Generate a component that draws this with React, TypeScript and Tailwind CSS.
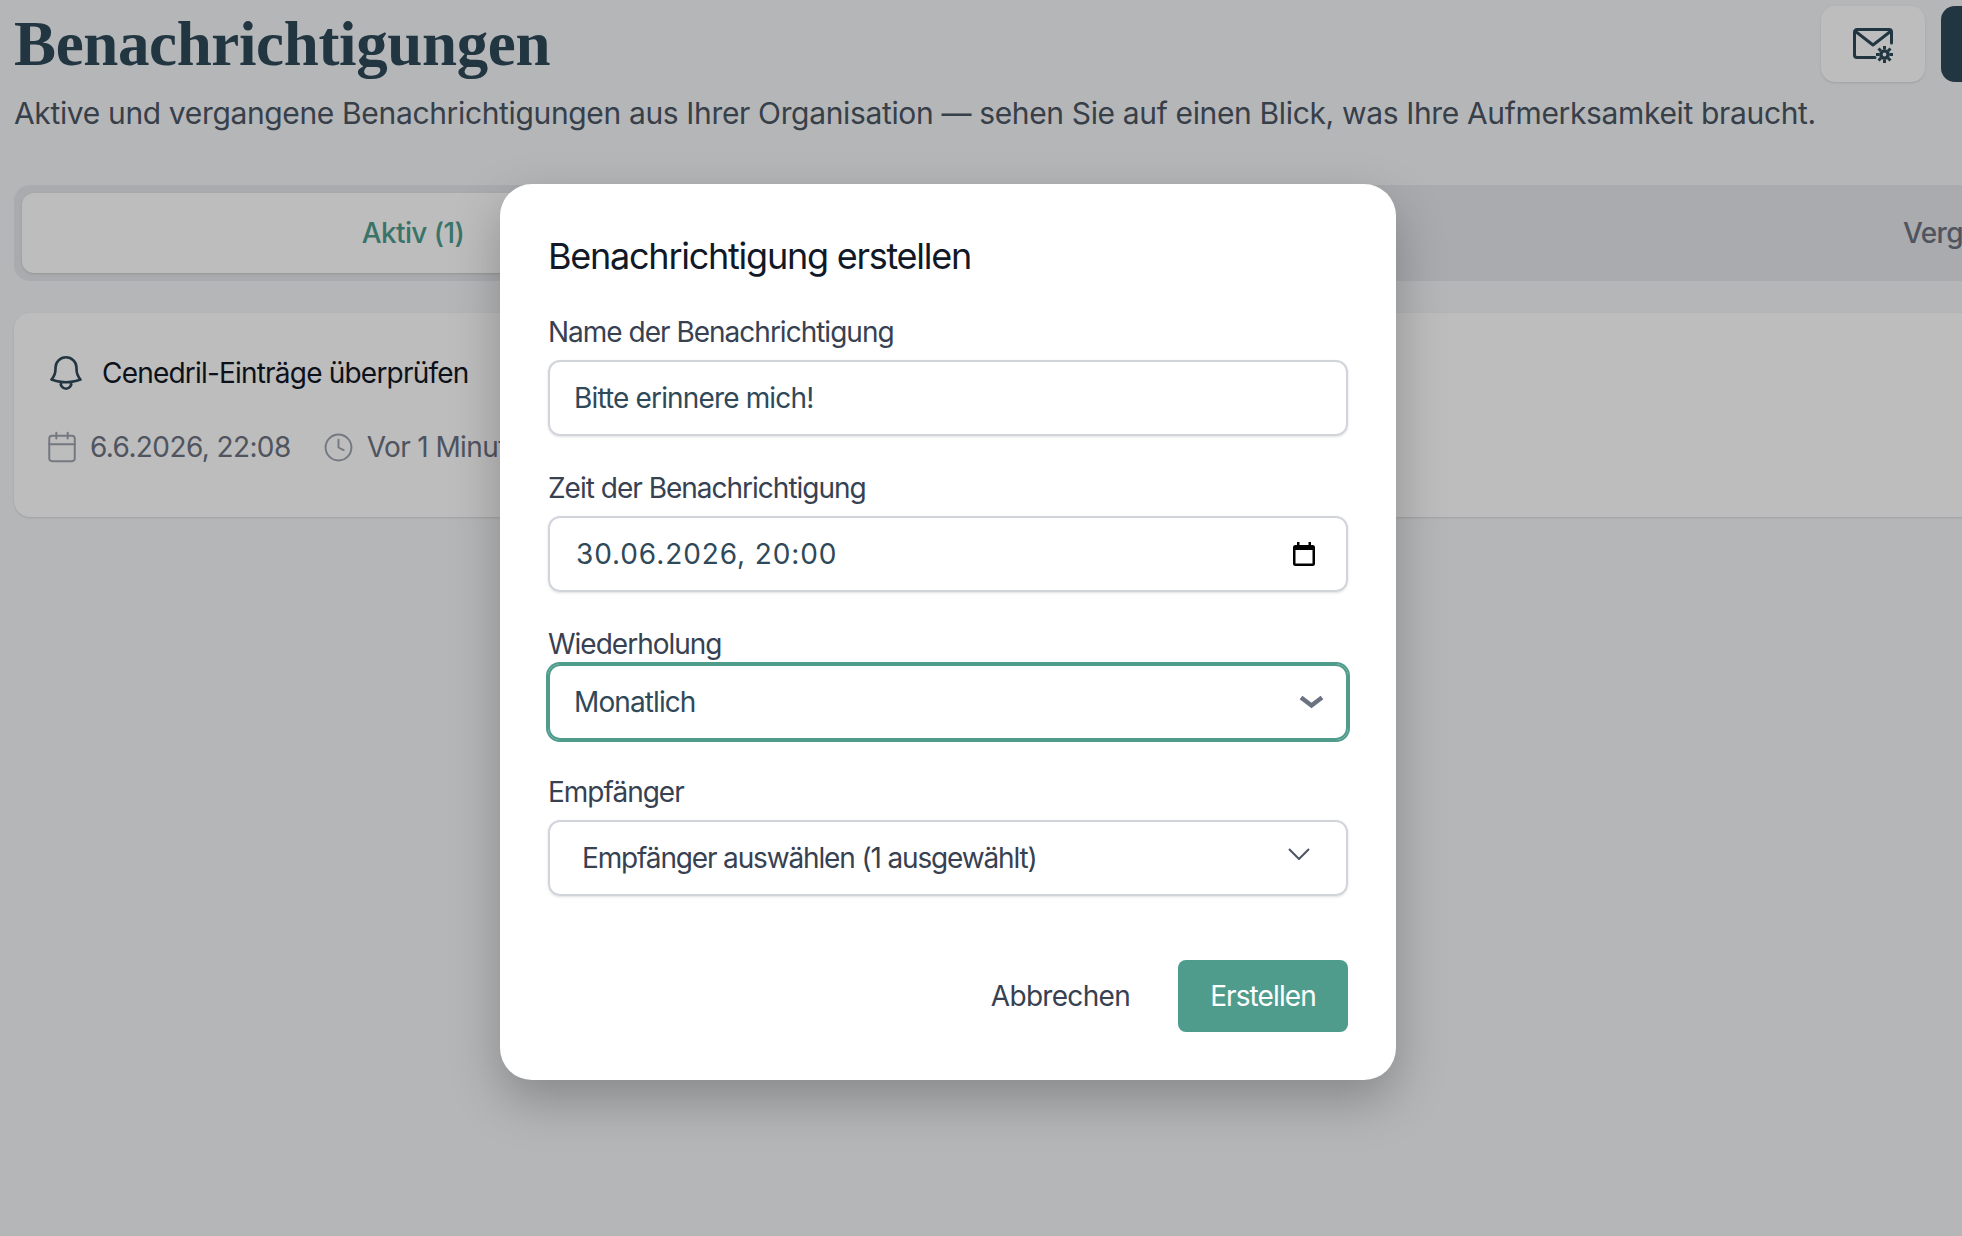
import { Calendar, Clock } from 'lucide-react';
import { HiOutlineBell } from 'react-icons/hi2';

function MailGear() {
  return (
    <svg viewBox="0 0 40 36" className="mt-[4px] w-[40px] h-[36px]" fill="none" stroke="#2f4959" strokeWidth="3">
      <path d="M38.500 15V4a2.500 2.500 0 0 0-2.500-2.500H4A2.500 2.500 0 0 0 1.500 4v23A2.500 2.500 0 0 0 4 29.500h18" strokeLinecap="round" />
      <path d="M2 3l18 14L38 3" strokeLinejoin="round" />
      <circle cx="31.500" cy="26.500" r="3.600" strokeWidth="3.400" />
      <path strokeWidth="3" d="M31.500 18v3.500M31.500 31.500V35M23 26.500h3.500M36.500 26.500H40M25.500 20.500l2.500 2.500M35 30l2.500 2.500M25.500 32.500L28 30M35 23l2.500-2.500" />
    </svg>
  );
}

function NativeCalendar() {
  return (
    <svg viewBox="0 0 22 24" className="w-[22px] h-[24px]">
      <path d="M4 0h2.500v3h9V0H18v3h1.500A2.500 2.500 0 0 1 22 5.500V21.500A2.500 2.500 0 0 1 19.500 24h-17A2.500 2.500 0 0 1 0 21.500V5.500A2.500 2.500 0 0 1 2.500 3H4z" fill="#000" />
      <rect x="2.500" y="8" width="17" height="13.500" fill="#fff" />
    </svg>
  );
}

function Label({ children, className }: { children: React.ReactNode; className: string }) {
  return <label className={`block text-[28px] leading-[40px] tracking-[-1px] text-[#374151] ${className}`}>{children}</label>;
}

export default function App() {
  return (
    <div className="relative w-[1962px] h-[1236px] overflow-hidden bg-[#f5f6f9] font-['Inter',sans-serif]">
      {/* page behind the dialog */}
      <div className="pl-[14px]">
        <div className="flex justify-between h-[93px] pt-[6px]">
          <h1 className="font-['Liberation_Serif',serif] font-bold text-[63px] leading-[76px] tracking-[-0.36px] text-[#2f4959]">Benachrichtigungen</h1>
          <div className="flex gap-[16px] -mr-[40px]">
            <button className="w-[104px] h-[76px] rounded-[14px] bg-white shadow-sm flex items-center justify-center">
              <MailGear />
            </button>
            <div className="w-[61px] h-[76px] rounded-[14px] bg-[#2f4959]" />
          </div>
        </div>
        <p className="text-[30px] leading-[40px] tracking-[-0.35px] text-[#4b5563] whitespace-nowrap">
          Aktive und vergangene Benachrichtigungen aus Ihrer Organisation — sehen Sie auf einen Blick, was Ihre Aufmerksamkeit braucht.
        </p>
        <div className="mt-[52px] h-[96px] w-[2400px] rounded-[16px] bg-[#e5e7eb] p-[8px] flex">
          <div className="w-[782px] rounded-[12px] bg-white shadow-sm flex items-center justify-center text-[28px] font-medium tracking-[-0.6px] text-[#4f9c8d]">
            Aktiv (1)
          </div>
          <div className="pl-[1099px] flex items-center text-[28px] font-medium tracking-[-0.6px] text-[#6b7280]">Vergangen (0)</div>
        </div>
        <div className="mt-[32px] h-[204px] w-[2400px] rounded-[16px] bg-white shadow-sm pl-[35px] pt-[40px]">
          <div className="flex items-center gap-[15px] h-[40px]">
            <HiOutlineBell className="-ml-[4px] w-[42px] h-[42px] text-[#2f4959]" />
            <span className="text-[28px] tracking-[-0.8px] text-[#111827]">Cenedril-Einträge überprüfen</span>
          </div>
          <div className="mt-[34px] flex items-center h-[40px] text-[#6b7280] text-[28px] tracking-[-0.6px]">
            <Calendar className="-ml-[4px] w-[34px] h-[34px] text-[#9ca3af]" strokeWidth={1.4} />
            <span className="ml-[11px]">6.6.2026, 22:08</span>
            <Clock className="ml-[32px] w-[31px] h-[31px] text-[#9ca3af]" strokeWidth={1.5} />
            <span className="ml-[13px]">Vor 1 Minute</span>
          </div>
        </div>
      </div>

      {/* dialog overlay */}
      <div className="absolute inset-0 bg-black/[0.26] flex items-start pt-[184px] pl-[500px]">
        <div className="w-[896px] h-[896px] rounded-[32px] bg-white px-[48px] pt-[48px] shadow-[0_20px_50px_rgba(0,0,0,0.25)]">
          <h2 className="text-[36px] leading-[48px] tracking-[-1.25px] text-[#111827]">Benachrichtigung erstellen</h2>

          <Label className="mt-[32px]">Name der Benachrichtigung</Label>
          <input
            readOnly
            value="Bitte erinnere mich!"
            className="mt-[8px] block w-full h-[76px] rounded-[12px] border-2 border-[#d1d5db] px-[24px] text-[28px] tracking-[-0.85px] text-[#2f4959] shadow-sm outline-none"
          />

          <Label className="mt-[32px]">Zeit der Benachrichtigung</Label>
          <div className="mt-[8px] flex items-center justify-between h-[76px] rounded-[12px] border-2 border-[#d1d5db] pl-[26px] pr-[31px] shadow-sm">
            <span className="text-[28px] tracking-[0.9px] text-[#2f4959]">30.06.2026, 20:00</span>
            <NativeCalendar />
          </div>

          <Label className="mt-[32px]">Wiederholung</Label>
          <div className="flex items-center justify-between h-[76px] rounded-[12px] border-2 border-[#4f9c8d] ring-2 ring-[#4f9c8d] pl-[24px] pr-[22px]">
            <span className="text-[28px] tracking-[-0.9px] text-[#2f4959]">Monatlich</span>
            <svg viewBox="0 0 25 14" className="w-[25px] h-[14px]" fill="none" stroke="#6b7280" strokeWidth="4.500">
              <path d="M2 2.500l10.500 8L23 2.500" />
            </svg>
          </div>

          <Label className="mt-[32px]">Empfänger</Label>
          <div className="mt-[8px] flex justify-between h-[76px] rounded-[12px] border-2 border-[#d1d5db] pl-[32px] pr-[36px] shadow-sm">
            <span className="self-center text-[28px] tracking-[-1.15px] text-[#374151]">Empfänger auswählen (1 ausgewählt)</span>
            <svg viewBox="0 0 22 12" className="mt-[26px] w-[22px] h-[12px]" fill="none" stroke="#4b5563" strokeWidth="2">
              <path d="M1 1l10 10L21 1" />
            </svg>
          </div>

          <div className="mt-[64px] flex justify-end items-center gap-[48px]">
            <button className="text-[28px] tracking-[-0.7px] text-[#374151]">Abbrechen</button>
            <button className="w-[170px] h-[72px] rounded-[8px] bg-[#4f9c8d] text-white text-[28px] tracking-[-0.9px]">Erstellen</button>
          </div>
        </div>
      </div>
    </div>
  );
}
